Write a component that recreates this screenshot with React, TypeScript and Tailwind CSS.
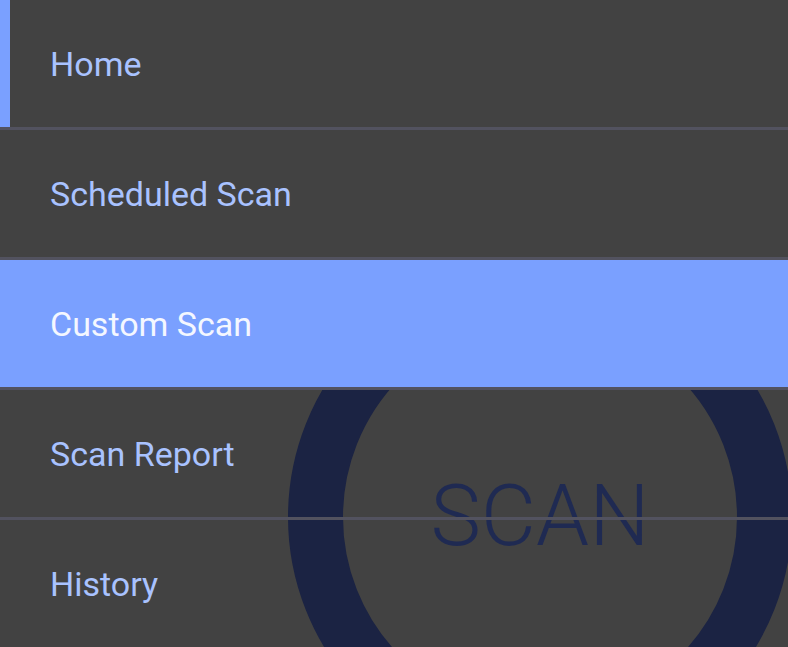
import React from "react";

const items = ["Home", "Scheduled Scan", "Custom Scan", "Scan Report", "History"];

export default function App() {
  return (
    <div
      className="relative w-[788px] h-[647px] overflow-hidden bg-[#424242]"
      style={{ fontFamily: "Roboto, 'Noto Sans', sans-serif" }}
    >
      <div className="absolute left-[288px] top-[265px] w-[504px] h-[504px] rounded-full border-[55px] border-[#1b2343] flex items-center justify-center">
        <span className="text-[85px] font-light leading-none text-[#1f2a52] -mt-[1px]">SCAN</span>
      </div>
      <div className="flex flex-col">
        {items.map((label, i) => {
          const selected = i === 2;
          const active = i === 0;
          return (
            <div
              key={label}
              className={
                "relative flex items-center h-[130px] border-b-[3px] border-[#52525f] " +
                (selected ? "bg-[#7aa0ff]" : "")
              }
            >
              {active && <div className="absolute left-0 top-0 bottom-0 w-[10px] bg-[#7aa0ff]" />}
              <span
                className={
                  "pl-[50px] pt-[2px] text-[34px] " + (selected ? "text-[#f4f7ff]" : "text-[#a9c2ff]")
                }
              >
                {label}
              </span>
            </div>
          );
        })}
      </div>
    </div>
  );
}
